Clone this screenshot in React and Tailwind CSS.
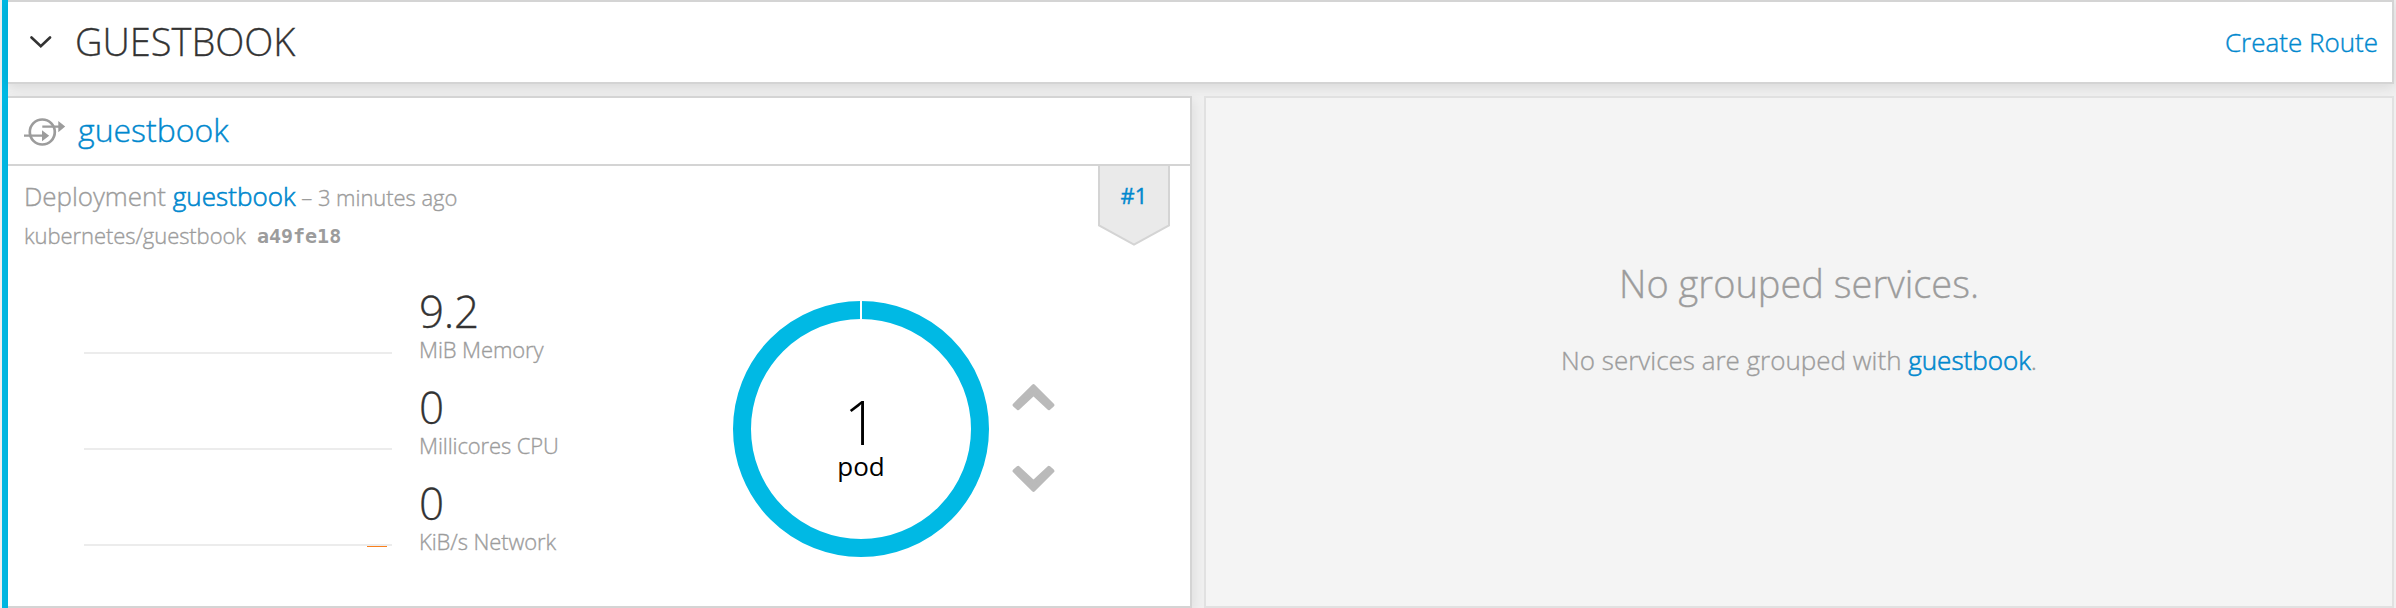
const stats = [
  { value: "9.2", label: "MiB Memory" },
  { value: "0", label: "Millicores CPU" },
  { value: "0", label: "KiB/s Network", mark: true },
];

function ServiceIcon() {
  return (
    <svg className="block h-[30px] w-[42px]" viewBox="0 0 42 30" fill="none" stroke="#9c9c9c" strokeWidth="2.3">
      <circle cx="18.3" cy="14" r="12.5" strokeWidth="2.7" />
      <path d="M0 17.7H18M18.3 8.6H35" />
      <path d="M18 12.2 25.2 17.7 18 23.2ZM34.3 3 41.2 8.6 34.3 14.2Z" fill="#9c9c9c" stroke="none" />
    </svg>
  );
}

function Arrow({ down }) {
  return (
    <svg className="block h-7 w-11" viewBox="0 0 44 28">
      <path
        d="M22 3 41 22 37.3 25.2 22 10.8 6.7 25.2 3 22Z"
        transform={down ? "matrix(1 0 0 -1 0.5 28)" : "translate(0.5 0)"}
        fill="#bababa"
        stroke="#bababa"
        strokeWidth="3.8"
        strokeLinejoin="round"
      />
    </svg>
  );
}

function Stat({ value, label, mark }) {
  return (
    <div className="flex h-24">
      <div className="relative mt-[66px] h-0.5 w-[308px] bg-[#ececec]">
        {mark && <div className="absolute top-0.5 left-[283px] h-px w-5 bg-[#f9801d]" />}
      </div>
      <div className="ml-[27px] font-light">
        <div className="h-11 text-[44px] leading-[50px] tracking-[-0.3px] text-[#333] [-webkit-text-stroke:0.3px]">
          {value}
        </div>
        <div className="text-[22px] leading-[38px] tracking-[-0.1px] whitespace-nowrap text-[#9c9c9c] [-webkit-text-stroke:0.35px]">
          {label}
        </div>
      </div>
    </div>
  );
}

export default function App() {
  return (
    <div className="h-[608px] w-[2396px] overflow-hidden bg-[#f0f0f0] pr-0.5 pl-0.5 font-['Open_Sans',sans-serif]">
      <div className="h-[608px] border-l-6 border-[#00b9e4]">
        <header className="flex h-[84px] items-center border-y-2 border-r-2 border-[#d4d4d4] bg-white pr-[14px] pl-[22px] shadow-[0_3px_12px_rgba(0,0,0,0.1)]">
          <svg className="block h-[13px] w-[22px]" viewBox="0 0 22 13" fill="none" stroke="#333" strokeWidth="2.6" strokeLinecap="round">
            <path d="M1.5 1.5 10.8 10.3 20 1.5" />
          </svg>
          <h1 className="ml-[23px] pb-0.5 text-[38px] leading-[78px] font-light text-[#333] [-webkit-text-stroke:0.3px]">
            GUESTBOOK
          </h1>
          <a className="ml-auto text-[26px] leading-[80px] font-light text-[#0088ce] [-webkit-text-stroke:0.4px]">
            Create Route
          </a>
        </header>
        <main className="mt-3 flex h-[512px]">
          <section className="w-[1184px] border-y-2 border-r-2 border-[#d4d4d4] bg-white shadow-[2px_4px_12px_rgba(0,0,0,0.08)]">
            <div className="flex h-[68px] border-b-2 border-[#d4d4d4] pl-4">
              <div className="pt-5">
                <ServiceIcon />
              </div>
              <h2 className="ml-3 text-[32px] leading-[64px] font-light text-[#0088ce] [-webkit-text-stroke:0.4px]">
                guestbook
              </h2>
            </div>
            <div className="flex h-[125px] justify-between pr-5 pl-4">
              <div className="font-light text-[#9c9c9c] [-webkit-text-stroke:0.35px]">
                <div className="h-10 text-[26px] leading-[60px] tracking-[-0.05px] whitespace-nowrap">
                  Deployment{" "}
                  <a className="tracking-[0.05px] text-[#0088ce] [-webkit-text-stroke:0.6px]">guestbook</a>
                  <span className="text-[22px]"> – 3 minutes ago</span>
                </div>
                <div className="flex text-[22px] leading-[59px] tracking-[-0.07px]">
                  <span>kubernetes/guestbook</span>
                  <span className="ml-[11px] pt-px font-['DejaVu_Sans_Mono',monospace] text-[20px] font-bold tracking-normal [-webkit-text-stroke:0]">
                    a49fe18
                  </span>
                </div>
              </div>
              <div className="relative h-20 w-[72px]">
                <svg className="absolute inset-0" width="72" height="80" viewBox="0 0 72 80">
                  <path d="M1-2V59.5L36 78.7 71 59.5V-2" fill="#eaeaea" stroke="#d4d4d4" strokeWidth="2" />
                </svg>
                <a className="relative block text-center text-[22px] leading-[59px] font-normal text-[#0088ce] [-webkit-text-stroke:0.4px]">
                  #1
                </a>
              </div>
            </div>
            <div className="flex">
              <div className="-mt-[5px] pl-[76px]">
                {stats.map((s) => (
                  <Stat key={s.label} {...s} />
                ))}
              </div>
              <div className="ml-auto flex items-start pr-[135px]">
                <div className="relative mt-[10px] size-64">
                  <svg className="absolute inset-0" width="256" height="256" viewBox="0 0 256 256">
                    <circle cx="128" cy="128" r="119" fill="none" stroke="#00b9e4" strokeWidth="18" />
                    <path d="M128 0V20" stroke="#fff" strokeWidth="2" />
                  </svg>
                  <div className="relative pt-[76px] text-center text-black">
                    <div className="h-[70px] text-[60px] leading-[90px] font-light">1</div>
                    <div className="text-[26px] leading-[38px]">pod</div>
                  </div>
                </div>
                <div className="mt-[92px] ml-[22px] flex flex-col gap-[54px]">
                  <Arrow />
                  <Arrow down />
                </div>
              </div>
            </div>
          </section>
          <section className="ml-3 w-[1190px] border-2 border-[#e1e1e1] bg-[#f4f4f4] pt-[150px] text-center font-light text-[#9c9c9c] [-webkit-text-stroke:0.35px]">
            <h2 className="text-[38px] leading-[71px]">No grouped services.</h2>
            <p className="text-[26px] leading-[83px]">
              No services are grouped with{" "}
              <a className="text-[#0088ce] [-webkit-text-stroke:0.6px]">guestbook</a>.
            </p>
          </section>
        </main>
      </div>
    </div>
  );
}
